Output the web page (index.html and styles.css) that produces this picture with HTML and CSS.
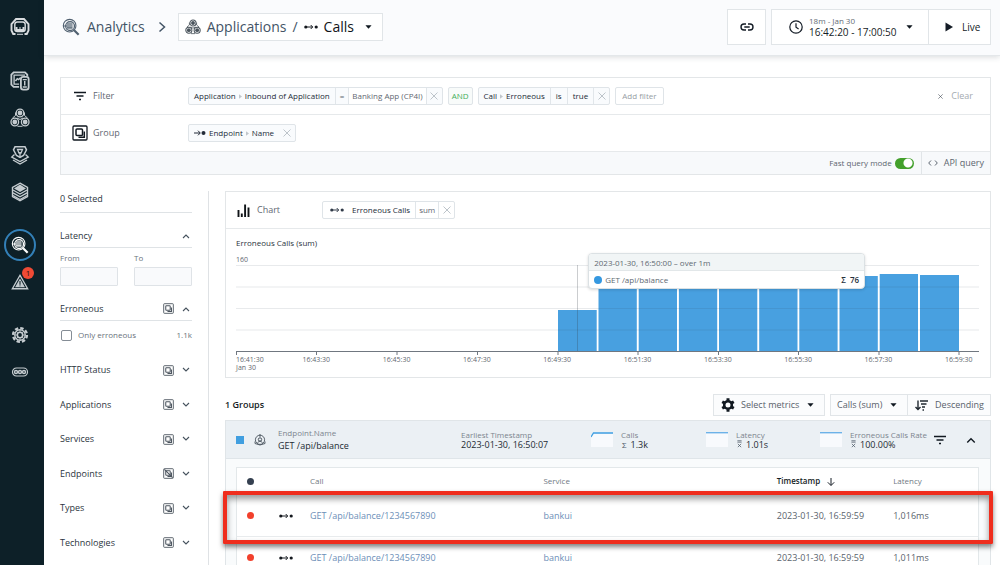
FILE: index.html
```html
<!DOCTYPE html>
<html lang="en">
<head>
<meta charset="utf-8">
<title>Analytics – Calls</title>
<link rel="stylesheet" href="styles.css">
</head>
<body>
<svg class="sprite" aria-hidden="true">
  <symbol id="analyze" viewBox="0 0 20 20"><g fill="none" stroke="currentColor"><circle cx="8.5" cy="8.5" r="7" stroke-width="1.2"/><circle cx="9" cy="9" r="5" stroke-width="1.2" fill="currentColor" fill-opacity="0.25"/><path d="M5.5 6.7h6M1 8.9h10.5M5.5 11h6" stroke-width="1.2"/><path d="M13.5 13.5l5 5" stroke-width="2.4"/></g></symbol>
  <symbol id="apps" viewBox="0 0 20 20"><g fill="none" stroke="currentColor"><circle cx="10" cy="5" r="3.8" stroke-width="1.3"/><circle cx="4.8" cy="14" r="3.8" stroke-width="1.3"/><circle cx="15.2" cy="14" r="3.8" stroke-width="1.3"/><path d="M5.5 4.5v3l-3 2.5M14.5 4.5v3l3 2.5M7.5 18.3h5M7 10l3 1.500 3-1.500" stroke-width="1"/></g><g fill="currentColor"><circle cx="10" cy="5" r="2.400"/><circle cx="4.800" cy="14" r="2.400"/><circle cx="15.200" cy="14" r="2.400"/></g></symbol>
  <symbol id="group" viewBox="0 0 16 16"><g fill="none" stroke="currentColor"><rect x="1" y="1" width="14" height="14" rx="1" stroke-width="1.3"/><rect x="4" y="4" width="6.500" height="6.500" rx="1" stroke-width="1.500"/><path d="M6.500 12.300h5.800V6.500" stroke-width="1.500"/></g></symbol>
  <symbol id="call" viewBox="0 0 14 6"><circle cx="1.800" cy="3" r="1.600" fill="currentColor"/><circle cx="12.200" cy="3" r="1.600" fill="currentColor"/><path d="M3 3h5.500M6.700 1l2 2-2 2" fill="none" stroke="currentColor" stroke-width="1"/></symbol>
  <symbol id="endpoint" viewBox="0 0 12 8"><circle cx="9.500" cy="4" r="2" fill="currentColor"/><path d="M0 4h6M4 1.700l2.300 2.300L4 6.300" fill="none" stroke="currentColor" stroke-width="1"/></symbol>
  <symbol id="filter" viewBox="0 0 12 10"><path d="M0 1.500h12M2.500 5h7M5 8.500h2" stroke="currentColor" stroke-width="1.300"/></symbol>
  <symbol id="down" viewBox="0 0 8 6"><path d="M1 1l3 3 3-3" fill="none" stroke="currentColor" stroke-width="1.100"/></symbol>
  <symbol id="up" viewBox="0 0 8 6"><path d="M1 5l3-3 3 3" fill="none" stroke="currentColor" stroke-width="1.100"/></symbol>
  <symbol id="caret" viewBox="0 0 8 4"><path d="M0.500 0h7L4 4z" fill="currentColor"/></symbol>
  <symbol id="close" viewBox="0 0 8 8"><path d="M0.500 0.500l7 7M7.500 0.500l-7 7" stroke="currentColor" stroke-width="0.900"/></symbol>
  <symbol id="sep" viewBox="0 0 4 6"><path d="M0 0l4 3-4 3z" fill="currentColor"/></symbol>
  <symbol id="mean" viewBox="0 0 6 9"><path d="M0.500 0.600h5M0.500 2.300h5M1 4.300l4 4M5 4.300l-4 4" fill="none" stroke="currentColor" stroke-width="0.900"/></symbol>
</svg>

<div class="app">
  <nav class="rail" aria-label="Main">
    <a href="#" class="rail-item logo" aria-label="Home"><svg viewBox="0 0 20 20"><path d="M5.500 17H3.200L1.500 13.500V7L6 2h8l4.500 5v6.500L16.800 17h-2.300" fill="none" stroke="currentColor" stroke-width="1.900"/><rect x="4.800" y="5" width="10.400" height="9.500" rx="2.500" fill="none" stroke="currentColor" stroke-width="1.400"/><path d="M5.500 10h2v2h2v-2h1v2h2v-2h2V14h-9z" fill="currentColor"/><path d="M7 17.300h6" stroke="currentColor" stroke-width="1"/></svg></a>
    <a href="#" class="rail-item" aria-label="Websites"><svg viewBox="0 0 22 22"><g fill="none" stroke="currentColor"><path d="M10 17.500H4L1.500 15V4L4 1.500h12.500L19 4v2" stroke-width="2"/><path d="M10 14.500H4.500v-10h12" stroke-width="1.500"/><rect x="12" y="6.500" width="8.500" height="14" rx="2.500" stroke-width="2"/><path d="M14 9.500h4.500M16.200 11v5M14 17.500h4.500M6 11l2-2.500 1.500 1 2-2" stroke-width="1.600"/></g></svg></a>
    <a href="#" class="rail-item" aria-label="Applications"><svg><use href="#apps"/></svg></a>
    <a href="#" class="rail-item" aria-label="Platforms"><svg viewBox="0 0 20 20"><g fill="none" stroke="currentColor"><path d="M10 1.800h5l1.500 3-3 5.700-3.500 2-3.500-2-3-5.700L5 1.800z" stroke-width="1.500"/><path d="M7.500 4.500h5L11 8H9zM10 7v5" stroke-width="1.300"/><path d="M4.500 9.500L1.800 12l8.200 4.500 8.200-4.500-2.700-2.500M3 15l7 4 7-4" stroke-width="1.400"/></g></svg></a>
    <a href="#" class="rail-item" aria-label="Infrastructure"><svg viewBox="0 0 20 20"><path d="M10 2.500L16 6.500 10 10 4 6.500z" fill="currentColor"/><g fill="none" stroke="currentColor" stroke-width="1.400"><path d="M10 1.200L17.500 5.500v9L10 18.800 2.500 14.500v-9z"/><path d="M3 8l7 4 7-4M3 10.800l7 4 7-4M3 13.500l7 4 7-4"/></g></svg></a>
    <a href="#" class="rail-item active" aria-label="Analytics"><svg><use href="#analyze"/></svg></a>
    <a href="#" class="rail-item alert" aria-label="Events"><svg viewBox="0 0 20 20"><path d="M10 2.500L18.500 17.500h-17z" fill="none" stroke="currentColor" stroke-width="1.500"/><path d="M10 6l5.500 9.800h-11z" fill="currentColor"/><path d="M10 9v4M10 13.800v1" stroke="#0d2028" stroke-width="1.200"/></svg><span class="badge">1</span></a>
    <a href="#" class="rail-item settings" aria-label="Settings"><svg viewBox="0 0 20 20"><g fill="none" stroke="currentColor"><circle cx="10" cy="10" r="7.700" stroke-width="2.600" stroke-dasharray="3.800 2.250"/><circle cx="10" cy="10" r="5.800" stroke-width="1.500"/><circle cx="10" cy="10" r="3" stroke-width="1.800"/></g><path d="M10 4v2.500M10 13.500V16M4 10h2.500M13.500 10H16M5.800 5.800l1.700 1.700M12.500 12.500l1.700 1.700M5.800 14.200l1.700-1.700M12.500 7.500l1.700-1.700" stroke="currentColor"/></svg></a>
    <a href="#" class="rail-item more" aria-label="More"><svg viewBox="0 0 20 20"><g fill="none" stroke="currentColor"><rect x="2.500" y="6" width="15" height="8" rx="4" stroke-width="1.200"/><circle cx="6" cy="10" r="1.500" stroke-width="1.400"/><circle cx="10" cy="10" r="1.500" stroke-width="1.400"/><circle cx="14" cy="10" r="1.500" stroke-width="1.400"/></g></svg></a>
  </nav>

  <div class="page">
    <header class="topbar">
      <svg class="crumb-icon"><use href="#analyze"/></svg>
      <a href="#" class="crumb">Analytics</a>
      <svg class="crumb-arrow" viewBox="0 0 8 12"><path d="M1.500 1.500L6.500 6l-5 4.500" fill="none" stroke="currentColor" stroke-width="1.500"/></svg>
      <button class="box scope"><svg class="i16 dark"><use href="#apps"/></svg><span class="crumb">Applications</span><span class="crumb">/</span><svg class="call-icon"><use href="#call"/></svg><span class="current">Calls</span><svg class="caret"><use href="#caret"/></svg></button>
      <div class="time">
        <button class="box link-btn" aria-label="Copy link"><svg viewBox="0 0 14 8"><path d="M6 1H4a3 3 0 0 0 0 6h2M8 1h2a3 3 0 0 1 0 6H8M4.300 4h5.400" fill="none" stroke="currentColor" stroke-width="1.400"/></svg></button>
        <div class="box time-group">
          <button class="range"><svg class="clock" viewBox="0 0 14 14"><circle cx="7" cy="7" r="6.200" fill="none" stroke="currentColor" stroke-width="1.200"/><path d="M7 3.300V7.200l2.600 1.800" fill="none" stroke="currentColor" stroke-width="1.200"/></svg><span class="range-text"><small>18m - Jan 30</small><span>16:42:20 - 17:00:50</span></span><svg class="caret"><use href="#caret"/></svg></button>
          <button class="live"><svg viewBox="0 0 8 10"><path d="M0.500 0.500L8 5 0.500 9.500z" fill="currentColor"/></svg>Live</button>
        </div>
      </div>
    </header>

    <main class="content">
      <section class="panel query">
        <div class="query-row">
          <span class="row-label"><svg class="filter-icon"><use href="#filter"/></svg>Filter</span>
          <div class="chips">
            <div class="chip"><span class="seg strong">Application<svg class="sep"><use href="#sep"/></svg>Inbound of Application</span><span class="seg eq">=</span><span class="seg plain small">Banking App (CP4I)</span><button class="seg x" aria-label="Remove"><svg><use href="#close"/></svg></button></div>
            <div class="chip and"><span class="seg">AND</span></div>
            <div class="chip"><span class="seg strong">Call<svg class="sep"><use href="#sep"/></svg>Erroneous</span><span class="seg strong value">is</span><span class="seg strong value">true</span><button class="seg x" aria-label="Remove"><svg><use href="#close"/></svg></button></div>
            <button class="chip add">Add filter</button>
          </div>
          <button class="clear"><svg><use href="#close"/></svg>Clear</button>
        </div>
        <div class="query-row">
          <span class="row-label"><svg class="group-icon"><use href="#group"/></svg>Group</span>
          <div class="chips">
            <div class="chip"><span class="seg strong"><svg class="endpoint"><use href="#endpoint"/></svg>Endpoint<svg class="sep"><use href="#sep"/></svg>Name</span><button class="seg x bare" aria-label="Remove"><svg><use href="#close"/></svg></button></div>
          </div>
        </div>
        <div class="query-foot">
          <label class="fast">Fast query mode<input type="checkbox" class="switch" checked></label>
          <button class="api"><svg viewBox="0 0 10 6"><path d="M3 0.500L0.700 3 3 5.500M7 0.500L9.300 3 7 5.500" fill="none" stroke="currentColor"/></svg>API query</button>
        </div>
      </section>

      <div class="columns">
        <aside class="facets">
          <h2 class="facet-title selected">0 Selected</h2>
          <section class="latency">
            <h2 class="facet-title">Latency<svg class="chev"><use href="#up"/></svg></h2>
            <div class="bounds">
              <label>From<input type="text"></label>
              <label>To<input type="text"></label>
            </div>
          </section>
          <section class="erroneous">
            <h2 class="facet-title">Erroneous<svg class="g"><use href="#group"/></svg><svg class="chev"><use href="#up"/></svg></h2>
            <label class="check"><input type="checkbox">Only erroneous<span class="count">1.1k</span></label>
          </section>
          <div class="facet-list">
            <h2>HTTP Status<svg class="g"><use href="#group"/></svg><svg class="chev"><use href="#down"/></svg></h2>
            <h2>Applications<svg class="g"><use href="#group"/></svg><svg class="chev"><use href="#down"/></svg></h2>
            <h2>Services<svg class="g"><use href="#group"/></svg><svg class="chev"><use href="#down"/></svg></h2>
            <h2>Endpoints<svg class="g" viewBox="0 0 16 16"><use href="#group" width="16" height="16"/><path d="M2 2l12 12" stroke="currentColor" stroke-width="1.500"/></svg><svg class="chev"><use href="#down"/></svg></h2>
            <h2>Types<svg class="g"><use href="#group"/></svg><svg class="chev"><use href="#down"/></svg></h2>
            <h2>Technologies<svg class="g"><use href="#group"/></svg><svg class="chev"><use href="#down"/></svg></h2>
          </div>
        </aside>

        <div class="results">
          <section class="panel chart">
            <div class="chart-head">
              <span class="row-label"><svg class="chart-icon" viewBox="0 0 12 13"><path d="M1 13V6M4.300 13V9.500M7.600 13V0.500M11 13V3.500" stroke="currentColor" stroke-width="1.900"/></svg>Chart</span>
              <div class="chip"><span class="seg strong metric"><svg class="call-icon"><use href="#call"/></svg>Erroneous Calls</span><span class="seg plain small">sum</span><button class="seg x" aria-label="Remove"><svg><use href="#close"/></svg></button></div>
            </div>
            <div class="chart-body">
              <h3>Erroneous Calls (sum)</h3>
              <div class="ymax">160</div>
              <div class="plot">
                <svg viewBox="0 0 743 91" preserveAspectRatio="none" class="bars">
                  <path fill="#48a0e0" d="M322 45h38.700v41h-38.700zM362.500 14h38.300v72h-38.300zM402.700 14h38.300v72h-38.300zM442.900 14h38.300v72h-38.300zM483 14h38.300v72h-38.300zM523.200 14h38.300v72h-38.300zM563.300 14h38.300v72h-38.300zM603.500 11h38.300v75h-38.300zM643.700 9h38.300v77h-38.300zM684 10h39v76h-39z"/>
                  <path d="M0 0.500h743M0 22h743M0 43.500h743M0 65h743" stroke="#304050" stroke-opacity="0.110"/>
                  <path d="M341.500 0v86" stroke="#303840" stroke-opacity="0.250"/>
                  <path d="M0 86.500h743M0.500 86v4M80.500 86v4M161 86v4M241.500 86v4M322 86v4M402 86v4M482.500 86v4M562.500 86v4M643 86v4M723 86v4" stroke="#707780" fill="none"/>
                </svg>
                <div class="tip">
                  <div class="tip-head">2023-01-30, 16:50:00 – over 1m</div>
                  <div class="tip-row"><i></i>GET /api/balance<b>Σ&nbsp; 76</b></div>
                </div>
              </div>
              <div class="ticks"><span>16:41:30<br>Jan 30</span><span>16:43:30</span><span>16:45:30</span><span>16:47:30</span><span>16:49:30</span><span>16:51:30</span><span>16:53:30</span><span>16:55:30</span><span>16:57:30</span><span>16:59:30</span></div>
            </div>
          </section>

          <div class="toolbar">
            <h2>1 Groups</h2>
            <button class="box metrics"><svg class="gear" viewBox="0 0 14 14"><circle cx="7" cy="7" r="3.800" fill="none" stroke="currentColor" stroke-width="2.600"/><path d="M7 0.300v2.500M7 11.200v2.500M1.200 3.700l2.200 1.200M10.600 9.100l2.200 1.200M1.200 10.300l2.200-1.200M10.600 4.900l2.200-1.200" stroke="currentColor" stroke-width="3"/></svg>Select metrics<svg class="caret"><use href="#caret"/></svg></button>
            <div class="box order"><button>Calls (sum)<svg class="caret"><use href="#caret"/></svg></button><button><svg class="sort" viewBox="0 0 13 11"><path d="M3 0.500v8.500M0.500 7L3 9.500 5.500 7M5 1h8M6 4h5.500M7 7h3M7.500 10h1.500" fill="none" stroke="currentColor" stroke-width="1.400"/></svg>Descending</button></div>
          </div>

          <section class="group">
            <div class="group-head">
              <div class="marks"><i></i><svg viewBox="0 0 12 12"><g fill="none" stroke="currentColor"><circle cx="6" cy="5.800" r="4.600" stroke-width="0.900"/><circle cx="6" cy="5.500" r="1.700"/><path d="M6 0v3M3.500 8.500L6 7l2.500 1.500M1 7.500v2l5 1.500 5-1.500v-2" stroke-width="0.900"/></g></svg></div>
              <div class="stat name"><small>Endpoint.Name</small><span>GET /api/balance</span></div>
              <div class="stat"><small>Earliest Timestamp</small><span>2023-01-30, 16:50:07</span></div>
              <div class="metric-cell"><svg viewBox="0 0 22 15"><path d="M0 5.500L2.500 1.500H22V15H0z" fill="#f8fafd"/><path d="M0 5l2.500-4H22" fill="none" stroke="#3f9fe2" stroke-width="1.300"/></svg><div class="stat"><small>Calls</small><span><em>Σ</em>1.3k</span></div></div>
              <div class="metric-cell"><svg viewBox="0 0 22 15"><path d="M0 1h22v14H0z" fill="#f8fafd"/><path d="M0 0.700h22" stroke="#6cb2e8" stroke-width="1.400"/></svg><div class="stat"><small>Latency</small><span><svg class="mean"><use href="#mean"/></svg>1.01s</span></div></div>
              <div class="metric-cell"><svg viewBox="0 0 22 15"><path d="M0 1h22v14H0z" fill="#f8fafd"/><path d="M0 0.700h22" stroke="#6cb2e8" stroke-width="1.400"/></svg><div class="stat"><small>Erroneous Calls Rate</small><span><svg class="mean"><use href="#mean"/></svg>100.00%</span></div></div>
              <div class="actions"><button aria-label="Filter group"><svg class="filter-icon"><use href="#filter"/></svg></button><button aria-label="Collapse"><svg class="collapse"><use href="#up"/></svg></button></div>
            </div>
            <div class="group-body">
              <table>
                <colgroup><col class="c-dot"><col class="c-type"><col class="c-call"><col class="c-service"><col class="c-time"><col></colgroup>
                <thead><tr><th><i class="dot dark-dot"></i></th><th></th><th>Call</th><th>Service</th><th class="sorted">Timestamp<svg viewBox="0 0 8 8"><path d="M4 0v7.300M0.800 4.300L4 7.500l3.200-3.200" fill="none" stroke="currentColor"/></svg></th><th>Latency</th></tr></thead>
                <tbody>
                  <tr class="marked"><td><i class="dot"></i><span class="highlight"></span></td><td><svg class="call-icon"><use href="#call"/></svg></td><td><a href="#">GET /api/balance/1234567890</a></td><td><a href="#">bankui</a></td><td>2023-01-30, 16:59:59</td><td>1,016ms</td></tr>
                  <tr><td><i class="dot"></i></td><td><svg class="call-icon"><use href="#call"/></svg></td><td><a href="#">GET /api/balance/1234567890</a></td><td><a href="#">bankui</a></td><td>2023-01-30, 16:59:59</td><td>1,011ms</td></tr>
                </tbody>
              </table>
            </div>
          </section>
        </div>
      </div>
    </main>
  </div>
</div>
</body>
</html>
```
FILE: styles.css
```css
* { box-sizing: border-box; }
body { margin: 0; font: 9px/12px "Open Sans", "Noto Sans", sans-serif; color: #2c3540; background: #fff; }
button { font: inherit; color: inherit; background: none; border: 0; padding: 0; margin: 0; }
input { font: inherit; margin: 0; }
a { color: inherit; text-decoration: none; }
h2, h3 { margin: 0; font-size: 9px; font-weight: 500; }
svg { display: block; flex: none; }
small { font-size: 8px; }
.sprite { position: absolute; width: 0; height: 0; }

.app { display: grid; grid-template-columns: 44px minmax(0, 1fr); height: 100vh; overflow: hidden; }

/* Navigation rail */
.rail { background: #0d2028; display: flex; flex-direction: column; align-items: center; padding: 16px 4px 0 0; color: #c5ccd0; }
.rail-item { position: relative; display: flex; align-items: center; justify-content: center; width: 32px; height: 22px; margin-bottom: 15px; }
.rail-item svg { width: 20px; height: 20px; }
.logo { margin-bottom: 32px; color: #d8dcdf; }
.rail-item.active { height: 32px; margin: 11px 0 10px; border: 2px solid #3380b8; border-radius: 50%; color: #fff; }
.rail-item.active svg { width: 18px; height: 18px; }
.rail-item.alert { margin-bottom: 31px; }
.rail-item.alert svg, .rail-item.settings svg { width: 18px; height: 18px; }
.badge { position: absolute; top: -4px; right: 2px; width: 12px; height: 12px; border-radius: 50%; background: #ef4a35; color: #2a1010; font-size: 8px; text-align: center; }

/* Top bar */
.page { display: flex; flex-direction: column; min-width: 0; }
.topbar { display: flex; align-items: center; height: 56px; flex: none; padding: 0 9px 1px 18px; background: #fafbfd; border-bottom: 1px solid #e4e7ea; box-shadow: 0 1px 6px rgba(40, 50, 60, .18); font-size: 14px; line-height: 20px; }
.box { border: 1px solid #e1e5e8; background: #fff; display: flex; align-items: center; }
.crumb-icon { width: 18px; height: 18px; color: #506070; margin-right: 7px; }
.crumb { color: #435466; }
.crumb-arrow { width: 8px; height: 12px; margin: 0 12px 0 13px; color: #435466; }
.scope { height: 28px; padding: 0 10px 0 6px; gap: 6px; }
.i16 { width: 16px; height: 16px; }
.dark { color: #4a545c; }
.current { color: #101418; }
.call-icon { width: 14px; height: 6px; color: #14181e; }
.caret { width: 7px; height: 4px; color: #101820; }
.scope .caret { margin-left: 5px; }
.time { margin-left: auto; display: flex; gap: 5px; height: 36px; font-size: 10px; line-height: 12px; color: #141c26; }
.link-btn { width: 39px; justify-content: center; }
.link-btn svg { width: 14px; height: 8px; }
.time-group { width: 220px; }
.range { display: flex; align-items: center; height: 100%; flex: 1; padding-left: 17px; text-align: left; border-right: 1px solid #e1e5e8; }
.clock { width: 14px; height: 14px; margin-right: 6px; }
.range-text { display: flex; flex-direction: column; }
.range-text small { color: #646c75; line-height: 10px; }
.range .caret { margin: 0 15px 0 auto; }
.live { display: flex; align-items: center; gap: 9px; width: 61px; padding-left: 16px; }
.live svg { width: 8px; height: 10px; }

/* Query panel */
.content { padding: 21px 9px 0 16px; }
.panel { border: 1px solid #e3e6e8; background: #fff; }
.query-row { display: flex; align-items: center; height: 37px; padding: 0 17px 0 11px; border-bottom: 1px solid #e6e9eb; }
.row-label { display: flex; align-items: center; gap: 5px; color: #5f6872; }
.query .row-label { width: 116px; }
.filter-icon { width: 12px; height: 10px; color: #111820; }
.query .filter-icon { margin: 0 2px; }
.group-icon { width: 16px; height: 16px; color: #111820; }
.chips { display: flex; align-items: center; gap: 5px; }
.chip { display: flex; height: 18px; border: 1px solid #dfe4e8; border-radius: 2px; background: #f9fbfd; font-size: 8px; line-height: 16px; color: #5f6872; white-space: nowrap; }
.seg { display: flex; align-items: center; padding: 0 4px; border-left: 1px solid #e1e6ea; }
.seg:first-child { border-left: 0; padding: 0 5px; }
.seg.small { padding: 0 3px; }
.seg.value { padding: 0 5px; }
.strong { color: #232b38; font-weight: 500; }
.plain { background: #fff; }
.sep { width: 3px; height: 5px; margin: 0 3px; color: #c0c6cc; }
.seg.x { width: 16px; justify-content: center; padding: 0; color: #b6bdc4; }
.x svg { width: 8px; height: 8px; }
.x.bare { border-left: 0; }
.endpoint { width: 12px; height: 8px; margin-right: 3px; }
.and { color: #3fae59; background: #f8fbfa; }
.and .seg:first-child { padding: 0 3px; }
.add { padding: 0 6px; color: #969da4; background: #fff; }
.clear { margin-left: auto; display: flex; align-items: center; gap: 8px; color: #a5abb1; }
.clear svg { width: 5px; height: 5px; color: #39424c; }
.query-foot { display: flex; justify-content: flex-end; height: 22px; background: #f7f9fb; color: #5d6670; }
.fast { display: flex; align-items: center; gap: 3px; font-size: 8px; padding-right: 7px; }
.switch { appearance: none; width: 19px; height: 11px; border-radius: 6px; background: radial-gradient(circle at 13px 5px, #fff 4px, #43a02c 5px); }
.api { display: flex; align-items: center; gap: 6px; padding: 0 6px; border-left: 1px solid #e1e5e8; }
.api svg { width: 10px; height: 6px; }

/* Facets */
.columns { display: grid; grid-template-columns: 149px minmax(0, 1fr); gap: 16px; margin-top: 16px; }
.facets { border-right: 1px solid #dfe2e5; padding-right: 16px; min-height: 400px; }
.facet-title { display: flex; align-items: center; height: 24px; padding-right: 2px; border-bottom: 1px solid #dfe3e6; }
.facet-title.selected { height: 22px; padding-bottom: 6px; margin-bottom: 11px; }
.chev { width: 8px; height: 6px; color: #46525e; margin-left: 8px; }
.latency .chev { margin-left: auto; }
.g { width: 11px; height: 11px; margin-left: auto; color: #4b545e; }
.bounds { display: flex; gap: 16px; padding-top: 4px; }
.bounds label { flex: 1; min-width: 0; font-size: 8px; color: #6a727b; }
.bounds input { display: block; width: 100%; height: 19px; margin-top: 3px; border: 1px solid #dfe3e7; border-radius: 1px; background: #f9fafc; }
.latency { margin-bottom: 11px; }
.check { display: flex; align-items: center; height: 28px; gap: 6px; font-size: 8px; color: #69727b; }
.check input { appearance: none; width: 11px; height: 11px; border: 1px solid #858d96; border-radius: 2px; margin-left: 1px; }
.count { margin-left: auto; }
.facet-list { display: grid; grid-auto-rows: 1fr; min-height: 207px; margin-top: 4px; }
.facet-list h2 { display: flex; align-items: center; padding-right: 2px; }

/* Chart */
.chart-head { display: flex; align-items: center; height: 37px; padding-left: 11px; border-bottom: 1px solid #e6e9eb; }
.chart .row-label { width: 85px; gap: 7px; }
.chart-icon { width: 13px; height: 13px; color: #101418; }
.chart .chip { background: #fff; }
.metric { gap: 8px; }
.seg.metric { padding: 0 5px 0 7px; }
.metric .call-icon { color: #303a48; }
.chart-body { padding: 7px 11px 4px 10px; }
.chart-body h3 { font-size: 8px; line-height: 14px; }
.ymax { font-size: 7px; line-height: 10px; color: #5f6870; margin-top: 5px; }
.plot { position: relative; }
.bars { width: 100%; height: 91px; }
.ticks { display: flex; font-size: 7px; line-height: 8px; color: #5f6870; height: 17px; white-space: nowrap; }
.ticks span { flex: 0 0 10.81%; text-align: center; }
.ticks span:first-child { flex-basis: 5.4%; text-align: left; }
.tip { position: absolute; left: 47.4%; top: -12px; width: 277px; border: 1px solid #dbe1e4; border-radius: 4px; background: #fff; overflow: hidden; font-size: 8px; line-height: 17px; color: #606971; box-shadow: 0 1px 3px rgba(0, 0, 0, .15); }
.tip-head { background: #f1f5f6; padding: 0 5px; height: 17px; border-bottom: 1px solid #e2e7e9; }
.tip-row { display: flex; align-items: center; gap: 3px; padding: 0 5px; height: 17px; }
.tip-row i { width: 8px; height: 8px; border-radius: 50%; background: #3598e0; }
.tip-row b { margin-left: auto; color: #26303c; font-weight: 600; }

/* Groups */
.toolbar { display: flex; align-items: center; height: 22px; margin: 16px 0 4px; color: #58616b; }
.toolbar h2 { margin-right: auto; color: #151c24; font-weight: 600; }
.toolbar .box { height: 22px; background: #fbfcfd; }
.metrics { width: 112px; padding: 0 10px 0 7px; margin-right: 5px; }
.gear { width: 14px; height: 14px; color: #111820; margin-right: 6px; }
.metrics .caret { margin-left: auto; }
.order { width: 161px; }
.order button { display: flex; align-items: center; height: 100%; }
.order button:first-child { flex: 1; padding: 0 10px 0 6px; justify-content: space-between; border-right: 1px solid #e1e5e8; }
.order button:last-child { padding: 0 6px 0 7px; gap: 7px; }
.sort { width: 13px; height: 11px; color: #202830; }
.group { border: 1px solid #e0e5e8; background: #f9fbfc; }
.group-head { display: grid; grid-template-columns: 42px 183fr 130fr 115fr 114fr 108fr 52px; align-items: center; height: 38px; padding: 0 10px; background: #ebf0f4; border-bottom: 1px solid #dfe5e9; white-space: nowrap; }
.marks { display: flex; align-items: center; gap: 10px; color: #48525c; }
.marks i { width: 8px; height: 8px; background: #419fe0; }
.marks svg { width: 12px; height: 12px; }
.stat { display: flex; flex-direction: column; color: #222a33; }
.stat small { color: #7c858e; line-height: 9px; }
.stat span { display: flex; align-items: center; line-height: 11px; }
.name { gap: 3px; }
.stat em { font-style: normal; font-size: 8px; color: #4d5966; margin: 0 4px 0 1px; }
.mean { width: 5px; height: 8px; color: #4d5966; margin: 0 4px 0 1px; }
.metric-cell { display: flex; align-items: center; gap: 8px; }
.metric-cell > svg { width: 22px; height: 15px; }
.actions { display: flex; justify-content: space-between; padding: 0 4px 0 6px; }
.actions button { display: flex; align-items: center; }
.actions .collapse { width: 10px; height: 8px; color: #101820; }
.group-body { padding: 8px 11px 0 10px; }
table { width: 100%; table-layout: fixed; border-collapse: separate; border-spacing: 0; background: #fff; border: 1px solid #e3e8ea; }
.c-dot { width: 42px; }
.c-type { width: 31px; }
.c-call, .c-service { width: 31.5%; }
.c-time { width: 15.7%; }
th, td { padding: 0; text-align: left; white-space: nowrap; vertical-align: middle; border-bottom: 1px solid #e8ebed; }
th { height: 27px; font-size: 8px; font-weight: 400; color: #707983; }
td { height: 42px; color: #5a636c; }
td a { color: #6d8fb8; }
.sorted { color: #151c24; font-weight: 600; }
.sorted svg { display: inline-block; width: 8px; height: 8px; margin-left: 7px; vertical-align: middle; }
.dot { display: block; width: 7px; height: 7px; margin-left: 10px; border-radius: 50%; background: #f2402c; }
.dark-dot { background: #354050; }
.marked { position: relative; }
.highlight { position: absolute; top: -4px; bottom: -7px; left: -14px; right: -15px; border: 4px solid #ef2d1d; border-radius: 1px; box-shadow: 0 3px 5px rgba(0, 0, 0, .5), inset 0 4px 6px rgba(0, 0, 0, .4); }
```
